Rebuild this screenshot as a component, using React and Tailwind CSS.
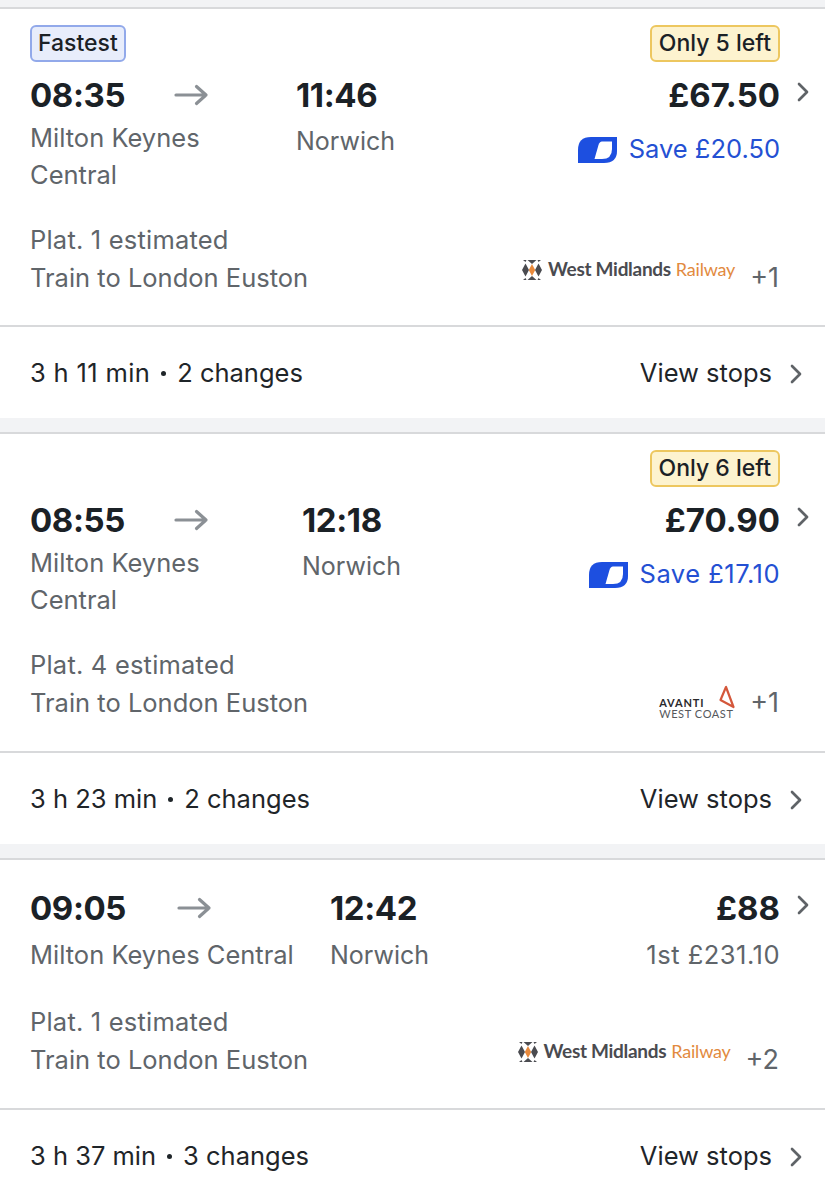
import { ChevronRight } from "lucide-react";

function SaveIcon() {
  return (
    <svg width="39" height="26" viewBox="0 0 39 26" className="shrink-0">
      <path d="M13 0H39V14Q39 26 26 26H0V13Q0 0 13 0Z" fill="#1d4fe0" />
      <path d="M24 4.5H34V12Q34 22 24 22H16.5L20.5 8Q21.5 4.5 24 4.5Z" fill="#fff" />
    </svg>
  );
}

function Arrow() {
  return (
    <svg width="36" height="22" viewBox="0 0 36 22" className="shrink-0">
      <path d="M3 11H33M23.5 2.5L33 11L23.5 19.5" fill="none" stroke="#8b9095" strokeWidth="3.2" strokeLinecap="round" strokeLinejoin="round" />
    </svg>
  );
}

function WmrLogo() {
  return (
    <div className="flex items-center gap-[6px] font-['Lato',sans-serif] whitespace-nowrap">
      <svg width="20" height="20" viewBox="0 0 20 20" className="shrink-0">
        <path d="M3.5 3.5L7 10L3.5 16.5L0 10Z" fill="#4a4b50" />
        <path d="M16.5 3.5L20 10L16.5 16.5L13 10Z" fill="#4a4b50" />
        <path d="M10 4L13.2 10L10 16L6.8 10Z" fill="#e98a3c" />
        <path d="M5.5 0H14.5L10 4ZM5.5 20H14.5L10 16Z" fill="#4a4b50" />
        <path d="M1 0H4.5L3.5 2ZM15.5 0H19L16.5 2ZM1 20H4.5L3.5 18ZM15.5 20H19L16.5 18Z" fill="#4a4b50" />
      </svg>
      <span className="text-[19px] font-bold tracking-[-0.3px] text-[#4a4b50]">West Midlands</span>
      <span className="-ml-[1px] text-[18px] tracking-[-0.2px] text-[#e28a3e]">Railway</span>
    </div>
  );
}

function AvantiLogo() {
  return (
    <div className="relative w-[76px] h-[36px] font-['Lato',sans-serif]">
      <div className="absolute left-0 top-[12px] text-[11px] leading-[12px] font-bold tracking-[0.9px] text-[#2a2a2c]">AVANTI</div>
      <div className="absolute left-0 top-[23px] text-[11px] leading-[12px] tracking-[0.6px] text-[#55585c] whitespace-nowrap">WEST COAST</div>
      <svg width="16" height="24" viewBox="0 0 16 24" className="absolute right-0 top-0">
        <path d="M7 2L1.5 15L14.5 22Z" fill="none" stroke="#d4573b" strokeWidth="2.2" strokeLinejoin="round" />
      </svg>
    </div>
  );
}

function Journey({ fastest, left, depart, arrive, price, save, saveText, first, plat, operator, extra, time, timeText, changes, departW, arrowGap, nameTop, arriveTop, infoGap, oneLine, logoShift }) {
  return (
    <section className="bg-white border-t-2 border-[#d8d9db]">
      <div className="pl-[30px] pr-[6px]">
        {(fastest || left) && (
          <div className="flex justify-between items-start pt-[16px] pr-[39px] h-[52px]">
            {fastest ? (
              <span className="h-[37px] px-[6px] flex items-center rounded-[6px] border-2 border-[#92a9ea] bg-[#e8edfb] text-[23px] font-medium text-[#1b2126]">Fastest</span>
            ) : <span />}
            {left && (
              <span className="h-[37px] px-[7px] flex items-center rounded-[6px] border-2 border-[#edc75f] bg-[#fdf3cf] text-[23px] font-medium text-[#1b2126]">{left}</span>
            )}
          </div>
        )}
        <div className={fastest || left ? "flex pt-[12px]" : "flex pt-[26px]"}>
          <div className={departW}>
            <div className="flex items-center">
              <span className="text-[33px] leading-[44px] font-bold text-[#1b2126] tracking-[-0.4px]">{depart}</span>
              <span className={arrowGap}><Arrow /></span>
            </div>
            <div className={nameTop}>Milton Keynes {oneLine ? "Central" : <><br />Central</>}</div>
          </div>
          <div className="flex-1">
            <div className="text-[33px] leading-[44px] font-bold text-[#1b2126] tracking-[-0.4px]">{arrive}</div>
            <div className={arriveTop}>Norwich</div>
          </div>
          <div className="flex items-start gap-[7px]">
            <div className="flex flex-col items-end">
              <div className="text-[33px] leading-[44px] font-bold text-[#1b2126]">{price}</div>
              {save && (
                <div className="flex items-center gap-[12px] mt-[14px] h-[37px]">
                  <SaveIcon />
                  <span className={saveText}>Save {save}</span>
                </div>
              )}
              {first && <div className="text-[25.5px] tracking-[0.5px] leading-[37px] mt-[6px] text-[#60656a]">{first}</div>}
            </div>
            <ChevronRight size={32} strokeWidth={2} className="mt-[3px] text-[#5f6367]" />
          </div>
        </div>
        <div className={infoGap}>
          <div className="text-[25.5px] leading-[37.5px] text-[#60656a]">
            <div className="tracking-[0.2px]">{plat}</div>
            <div>Train to London Euston</div>
          </div>
          <div className="flex items-center gap-[15px]">
            <div className={logoShift}>{operator}</div>
            <span className="text-[27px] leading-[37px] text-[#60656a]">{extra}</span>
          </div>
        </div>
      </div>
      <div className="h-[93px] pt-[2px] border-t-2 border-[#d8d9db] pl-[30px] pr-[13px] flex items-center justify-between">
        <span className="flex items-center text-[25.5px] text-[#1f2529]">
          <span className={timeText}>{time}</span>
          <span className="mx-[11px] w-[5px] h-[5px] rounded-full bg-[#1f2529]" />
          {changes}
        </span>
        <span className="flex items-center gap-[8px] text-[25.5px] text-[#1f2529]">
          View stops
          <ChevronRight size={32} strokeWidth={2} className="text-[#5f6367]" />
        </span>
      </div>
    </section>
  );
}

export default function App() {
  return (
    <div className="w-[825px] h-[1200px] overflow-hidden bg-[#f2f3f5] pt-[7px] font-['Inter',sans-serif] flex flex-col gap-[14px]">
      <Journey
        fastest
        left="Only 5 left"
        depart="08:35"
        arrive="11:46"
        price="£67.50"
        save="£20.50"
        saveText="text-[25.5px] text-[#2450d3]"
        plat="Plat. 1 estimated"
        operator={<WmrLogo />}
        extra="+1"
        time="3 h 11 min"
        timeText="tracking-[0.35px]"
        changes="2 changes"
        departW="w-[266px]"
        arrowGap="ml-[48px]"
        nameTop="text-[25.5px] leading-[37px] mt-[2px] text-[#60656a]"
        arriveTop="text-[25px] leading-[37px] mt-[6px] text-[#60656a]"
        infoGap="flex justify-between items-end pr-[40px] mt-[28px] pb-[29px]"
        logoShift="-mt-[16px]"
      />
      <Journey
        left="Only 6 left"
        depart="08:55"
        arrive="12:18"
        price="£70.90"
        save="£17.10"
        saveText="text-[25.5px] tracking-[0.5px] text-[#2450d3]"
        plat="Plat. 4 estimated"
        operator={<AvantiLogo />}
        extra="+1"
        time="3 h 23 min"
        timeText=""
        changes="2 changes"
        departW="w-[272px]"
        arrowGap="ml-[48px]"
        nameTop="text-[25.5px] leading-[37px] mt-[2px] text-[#60656a]"
        arriveTop="text-[25px] leading-[37px] mt-[6px] text-[#60656a]"
        infoGap="flex justify-between items-end pr-[40px] mt-[28px] pb-[30px]"
        logoShift=""
      />
      <Journey
        depart="09:05"
        arrive="12:42"
        price="£88"
        first="1st £231.10"
        plat="Plat. 1 estimated"
        operator={<WmrLogo />}
        extra="+2"
        time="3 h 37 min"
        timeText=""
        changes="3 changes"
        departW="w-[300px]"
        arrowGap="ml-[50px]"
        oneLine
        nameTop="text-[25.5px] leading-[37px] mt-[6px] text-[#60656a]"
        arriveTop="text-[25px] leading-[37px] mt-[7px] text-[#60656a]"
        infoGap="flex justify-between items-end pr-[40px] mt-[29px] pb-[30px]"
        logoShift="-mt-[16px]"
      />
    </div>
  );
}
